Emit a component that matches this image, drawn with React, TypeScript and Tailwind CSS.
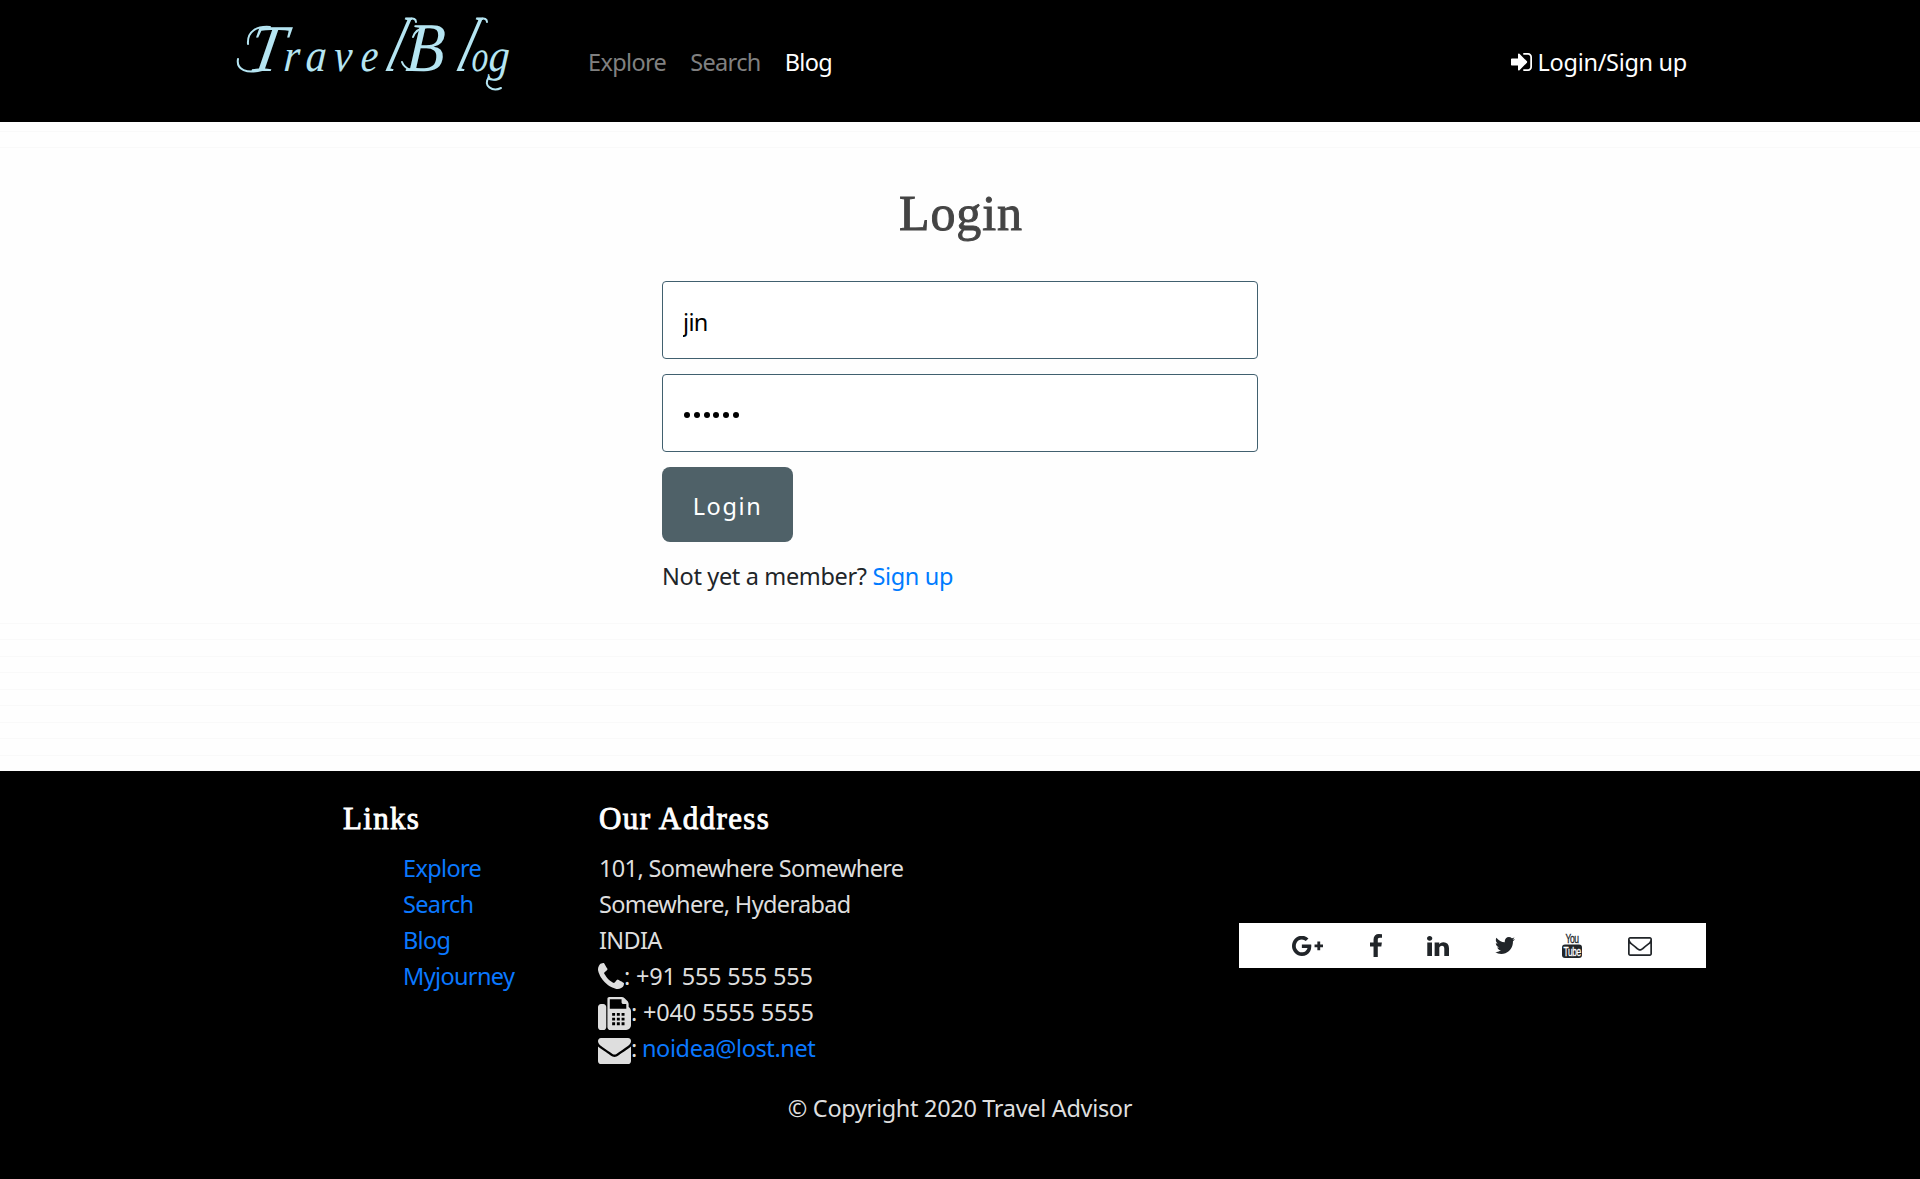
import type { ReactNode } from 'react';

const PATHS = {
  signIn:
    'M1312 896q0 26-19 45l-544 544q-19 19-45 19t-45-19-19-45v-288h-448q-26 0-45-19t-19-45v-384q0-26 19-45t45-19h448v-288q0-26 19-45t45-19 45 19l544 544q19 19 19 45zm352-352v704q0 119-84.5 203.5t-203.5 84.5h-320q-13 0-22.5-9.5t-9.5-22.5q0-4-1-20t-.5-26.5 3-23.5 10-19.5 20.5-6.5h320q66 0 113-47t47-113v-704q0-66-47-113t-113-47h-312l-11.5-1-11.5-3-8-5.5-7-9-2-13.5q0-4-1-20t-.5-26.5 3-23.5 10-19.5 20.5-6.5h320q119 0 203.5 84.5t84.5 203.5z',
  phone:
    'M1600 1240q0 27-10 70.5t-21 68.5q-21 50-122 106-94 51-186 51-27 0-53-3.5t-57.5-12.5-47-14.5-55.5-20.5-49-18q-98-35-175-83-127-79-264-216t-216-264q-48-77-83-175-3-9-18-49t-20.5-55.5-14.5-47-12.5-57.5-3.5-53q0-92 51-186 56-101 106-122 25-11 68.5-21t70.5-10q14 0 21 3 18 6 53 76 11 19 30 54t35 63.5 31 53.5q3 4 17.5 25t21.5 35.5 7 28.5q0 20-28.5 50t-62 55-62 53-28.5 46q0 9 5 22.5t8.5 20.5 14 24 11.5 19q76 137 174 235t235 174q2 1 19 11.5t24 14 20.5 8.5 22.5 5q18 0 46-28.5t53-62 55-62 50-28.5q14 0 28.5 7t35.5 21.5 25 17.5q25 15 53.5 31t63.5 35 54 30q70 35 76 53 3 7 3 21z',
  fax: 'M288 384q66 0 113 47t47 113v1088q0 66-47 113t-113 47h-128q-66 0-113-47t-47-113v-1088q0-66 47-113t113-47h128zM1664 547q58 34 93 93t35 128v768q0 106-75 181t-181 75h-864q-66 0-113-47t-47-113v-1536q0-40 28-68t68-28h672q40 0 88 20t76 48l152 152q28 28 48 76t20 88zM640 128v512h896v-256h-160q-40 0-68-28t-28-68v-160zM768 864v160h160v-160zM1024 864v160h160v-160zM1280 864v160h160v-160zM768 1120v160h160v-160zM1024 1120v160h160v-160zM1280 1120v160h160v-160zM768 1376v160h160v-160zM1024 1376v160h160v-160zM1280 1376v160h160v-160z',
  envelope:
    'M1792 710v794q0 66-47 113t-113 47h-1472q-66 0-113-47t-47-113v-794q44 49 101 87 362 246 497 345 57 42 92.5 65.5t94.5 48 110 24.5h2q51 0 110-24.5t94.5-48 92.5-65.5q170-123 498-345 57-39 100-87zm0-294q0 79-49 151t-122 123q-376 261-468 325-10 7-42.5 31t-54 38.8-52 33.2-57.5 27-50 9h-2q-23 0-50-9t-57.5-27-52-33.2-54-38.8-42.5-31q-91-64-262-182.5t-205-142.5q-62-42-117-115.5t-55-136.5q0-78 41.5-130t118.5-52h1472q65 0 112.5 47t47.5 113z',
  envelopeO:
    'M1664 1504v-768q-32 36-69 66-268 206-426 338-51 43-83 67t-86.5 48.5-102.5 24.5h-2q-48 0-102.5-24.5t-86.5-48.5-83-67q-158-132-426-338-37-30-69-66v768q0 13 9.5 22.5t22.5 9.5h1472q13 0 22.5-9.5t9.5-22.5zm0-1051v-24.5l-.5-13-3-12.5-5.5-9-9-7.5-14-2.5h-1472q-13 0-22.5 9.5t-9.5 22.5q0 168 147 284 193 152 401 317 6 5 35 29.5t46 37.5 44.5 31.5 50.5 27.5 43 9h2q20 0 43-9t50.5-27.5 44.5-31.5 46-37.5 35-29.5q208-165 401-317 54-43 100.5-115.5t46.5-131.5zm128-37v1088q0 66-47 113t-113 47h-1472q-66 0-113-47t-47-113v-1088q0-66 47-113t113-47h1472q66 0 113 47t47 113z',
  facebook:
    'M1343 12v264h-157q-86 0-116 36t-30 108v189h293l-39 296h-254v759h-306v-759h-255v-296h255v-218q0-186 104-288.5t277-102.5q147 0 228 12z',
  twitter:
    'M1684 408q-67 98-162 167 1 14 1 42 0 130-38 259.5t-115.5 248.5-184.5 210.5-258 146-323 54.5q-271 0-496-145 35 4 78 4 225 0 401-138-105-2-188-64.5t-114-159.5q33 5 61 5 43 0 85-11-112-23-185.5-111.5t-73.5-205.5v-4q68 38 146 41-66-44-105-115t-39-154q0-88 44-163 121 149 294.5 238.5t371.5 99.5q-8-38-8-74 0-134 94.5-228.5t228.5-94.5q140 0 236 102 109-21 205-78-37 115-142 178 93-10 186-50z',
  linkedin:
    'M477 625v991h-330v-991h330zm21-306q1 73-50.5 122t-135.5 49h-2q-82 0-132-49t-50-122q0-74 51.5-122.5t134.5-48.5 133 48.5 51 122.5zm1166 729v568h-329v-530q0-105-40.5-164.5t-126.5-59.5q-63 0-105.5 34.5t-63.5 85.5q-11 30-11 81v553h-329q2-399 2-647t-1-296l-1-48h329v144h-2q20-32 41-56t56.5-52 87-43.5 114.5-15.5q171 0 275 113.5t104 332.5z',
  googlePlus:
    'M1437 913q0 208-87 370.5t-248 254-369 91.5q-149 0-285-58t-234-156-156-234-58-285 58-285 156-234 234-156 285-58q286 0 491 192l-199 191q-117-113-292-113-123 0-227.5 62t-165.5 168.5-61 232.5 61 232.5 165.5 168.5 227.5 62q83 0 152.5-23t114.5-57.5 78.5-78.5 49-83 21.5-74h-416v-252h692q12 63 12 122zm867-122v210h-209v209h-210v-209h-209v-210h209v-209h210v209h209z',
};

function Icon({ d, box, className }: { d: string; box: string; className: string }) {
  return (
    <svg viewBox={box} preserveAspectRatio="none" className={`block shrink-0 ${className}`} fill="currentColor" fillRule="evenodd" aria-hidden="true">
      <path d={d} />
    </svg>
  );
}

function YoutubeIcon() {
  return (
    <svg viewBox="0 0 20 24" className="block h-6 w-5 shrink-0 overflow-visible" aria-hidden="true">
      <text x="3.5" y="9" fontSize="12" fontFamily="Liberation Sans" textLength="13" lengthAdjust="spacingAndGlyphs" fill="#212529" stroke="#212529" strokeWidth=".3">
        You
      </text>
      <rect x="0" y="10.5" width="20" height="13.5" rx="3" fill="#212529" />
      <text x="1.6" y="22" fontSize="13" fontFamily="Liberation Sans" textLength="17" lengthAdjust="spacingAndGlyphs" fill="#fff" stroke="#fff" strokeWidth=".3">
        Tube
      </text>
    </svg>
  );
}

// Each letter: character, x, font size, horizontal scale, extra slant in degrees.
const LOGO: [string, number, number, number, number][] = [
  ['T', 246, 67, 0.95, -10],
  ['r', 283, 46, 0.9, -4],
  ['a', 305, 46, 0.9, -4],
  ['v', 333, 46, 0.9, -4],
  ['e', 360, 46, 0.85, -4],
  ['l', 383, 77, 0.6, -18],
  ['B', 405, 70, 0.9, -4],
  ['l', 454, 77, 0.6, -18],
  ['o', 471, 44, 0.75, -4],
  ['g', 488, 46, 0.9, -4],
];

function Logo() {
  return (
    <svg width="288" height="122" viewBox="234 0 288 122" className="block shrink-0" role="img" aria-label="TravelBlog">
      <g fill="#b5e5f2" fontFamily="Liberation Serif" fontStyle="italic">
        {LOGO.map(([ch, x, size, scale, slant], i) => (
          <text key={i} fontSize={size} transform={`translate(${x} 71) skewX(${slant}) scale(${scale} 1)`}>
            {ch}
          </text>
        ))}
      </g>
      <g fill="none" stroke="#b5e5f2" strokeWidth="2" strokeLinecap="round">
        <path d="M248 44C247 31 257 26 270 27" />
        <path d="M262 70C247 74 236 70 238 59" />
        <path d="M413 37C415 31 420 28 427 27" />
        <path d="M411 16" />
        <path d="M410 70C406 68 403 65 402 62" />
        <path d="M411 19C413 18 416 19 416 22" />
        <path d="M482 19C484 18 487 19 487 22" />
        <path d="M489 77C482 86 493 92 501 88" />
      </g>
    </svg>
  );
}

function Contact({ icon, gap, children }: { icon: ReactNode; gap: string; children: ReactNode }) {
  return (
    <div className="flex h-9 items-center whitespace-nowrap">
      {icon}
      <span className={gap}>:</span>
      {children}
    </div>
  );
}

export default function App() {
  return (
    <div className="flex h-[1179px] w-[1920px] flex-col overflow-hidden bg-[#fefefe] font-['Noto_Sans',sans-serif] text-[23.5px] leading-9 tracking-[-0.65px] text-[#212529]">
      <header className="flex h-[122px] shrink-0 items-start bg-black pl-[234px]">
        <Logo />
        <nav className="ml-[66px] flex flex-1 gap-6 pt-[44px] text-[#808080]">
          <a>Explore</a>
          <a>Search</a>
          <a className="text-white">Blog</a>
        </nav>
        <a className="mr-[233px] flex items-center gap-1.5 pt-[44px] tracking-[-0.3px] text-white">
          <Icon d={PATHS.signIn} box="128 256 1536 1280" className="h-[18px] w-[21px]" />
          Login/Sign up
        </a>
      </header>

      <main className="flex h-[649px] shrink-0 flex-col">
        <div className="h-[27px] shrink-0 bg-[repeating-linear-gradient(180deg,#fefefe_0px,#fefefe_9px,#f9f9f9_9px,#f9f9f9_10px,#fefefe_10px,#fefefe_16px)]" />
        <div className="flex h-[472px] shrink-0 flex-col items-center bg-[#fefefe]">
          <h1 className="mt-[35px] h-[97px] pl-0.5 font-['Liberation_Serif',serif] text-[50px] leading-[58px] tracking-[0.9px] text-[#444] [-webkit-text-stroke:0.9px_#444]">Login</h1>
          <form className="flex w-[596px] flex-col items-start">
            <input readOnly value="jin" className="mb-[15px] h-[78px] w-full rounded border border-[#41606f] bg-white px-5 pt-[3px] text-black outline-none" />
            <div className="mb-[15px] flex h-[78px] w-full items-center gap-[3.8px] rounded border border-[#41606f] bg-white px-[21px] pt-1">
              {[0, 1, 2, 3, 4, 5].map((i) => (
                <span key={i} className="size-1.5 rounded-full bg-black" />
              ))}
            </div>
            <button type="button" className="h-[75px] w-[131px] rounded-lg bg-[#4f6168] pt-0.5 tracking-[1.6px] text-white">Login</button>
            <p className="mt-4 tracking-[-0.35px]">
              Not yet a member? <a className="text-[#007bff]">Sign up</a>
            </p>
          </form>
        </div>
        <div className="flex-1 bg-[repeating-linear-gradient(180deg,#fefefe_0px,#fefefe_2px,#f9f9f9_2px,#f9f9f9_3px,#fefefe_3px,#fefefe_16.5px)]" />
      </main>

      <footer className="flex h-[408px] flex-col bg-black text-[#dedede]">
        <div className="flex h-[298px] shrink-0 pl-[343px] pt-[29px]">
          <section className="w-[256px]">
            <h5 className="h-[50px] pt-px font-['Liberation_Serif',serif] text-[31px] leading-9 tracking-[1.3px] text-white [-webkit-text-stroke:0.9px_#fff]">Links</h5>
            <ul className="pl-[60px] text-[#0a78ff]">
              <li>Explore</li>
              <li>Search</li>
              <li>Blog</li>
              <li>Myjourney</li>
            </ul>
          </section>
          <section className="w-[640px]">
            <h5 className="h-[50px] pt-px font-['Liberation_Serif',serif] text-[31px] leading-9 tracking-[1.4px] text-white [-webkit-text-stroke:0.9px_#fff]">Our Address</h5>
            <address className="not-italic">
              <div>101, Somewhere Somewhere</div>
              <div>Somewhere, Hyderabad</div>
              <div>INDIA</div>
              <div className="-ml-px tracking-[-0.2px]">
                <Contact gap="w-[12px]" icon={<Icon d={PATHS.phone} box="192 128 1408 1408" className="h-[26px] w-[26px]" />}>
                  +91 555 555 555
                </Contact>
                <Contact gap="w-[12px]" icon={<Icon d={PATHS.fax} box="0 0 1792 1792" className="mt-[3px] h-[33px] w-[33px]" />}>
                  +040 5555 5555
                </Contact>
                <Contact gap="w-[11px]" icon={<Icon d={PATHS.envelope} box="0 256 1792 1408" className="mt-[5px] h-[26px] w-[33px]" />}>
                  <a className="tracking-[-0.4px] text-[#0a78ff]">noidea@lost.net</a>
                </Contact>
              </div>
            </address>
          </section>
          <div className="mt-[123px] flex h-[45px] w-[467px] items-center bg-white pl-[53px] text-[#212529]">
            <Icon d={PATHS.googlePlus} box="0 180 2304 1450" className="h-5 w-[31px]" />
            <Icon d={PATHS.facebook} box="479 0 864 1664" className="ml-[47px] h-[23px] w-3" />
            <Icon d={PATHS.linkedin} box="128 148 1536 1468" className="ml-[45px] h-5 w-[22px]" />
            <Icon d={PATHS.twitter} box="108 256 1576 1280" className="ml-[46px] h-[17px] w-5" />
            <div className="ml-[47px]">
              <YoutubeIcon />
            </div>
            <Icon d={PATHS.envelopeO} box="0 256 1792 1408" className="ml-[46px] mt-0.5 h-[19px] w-6" />
          </div>
        </div>
        <p className="mt-[21px] text-center tracking-[-0.32px]">© Copyright 2020 Travel Advisor</p>
      </footer>
    </div>
  );
}
